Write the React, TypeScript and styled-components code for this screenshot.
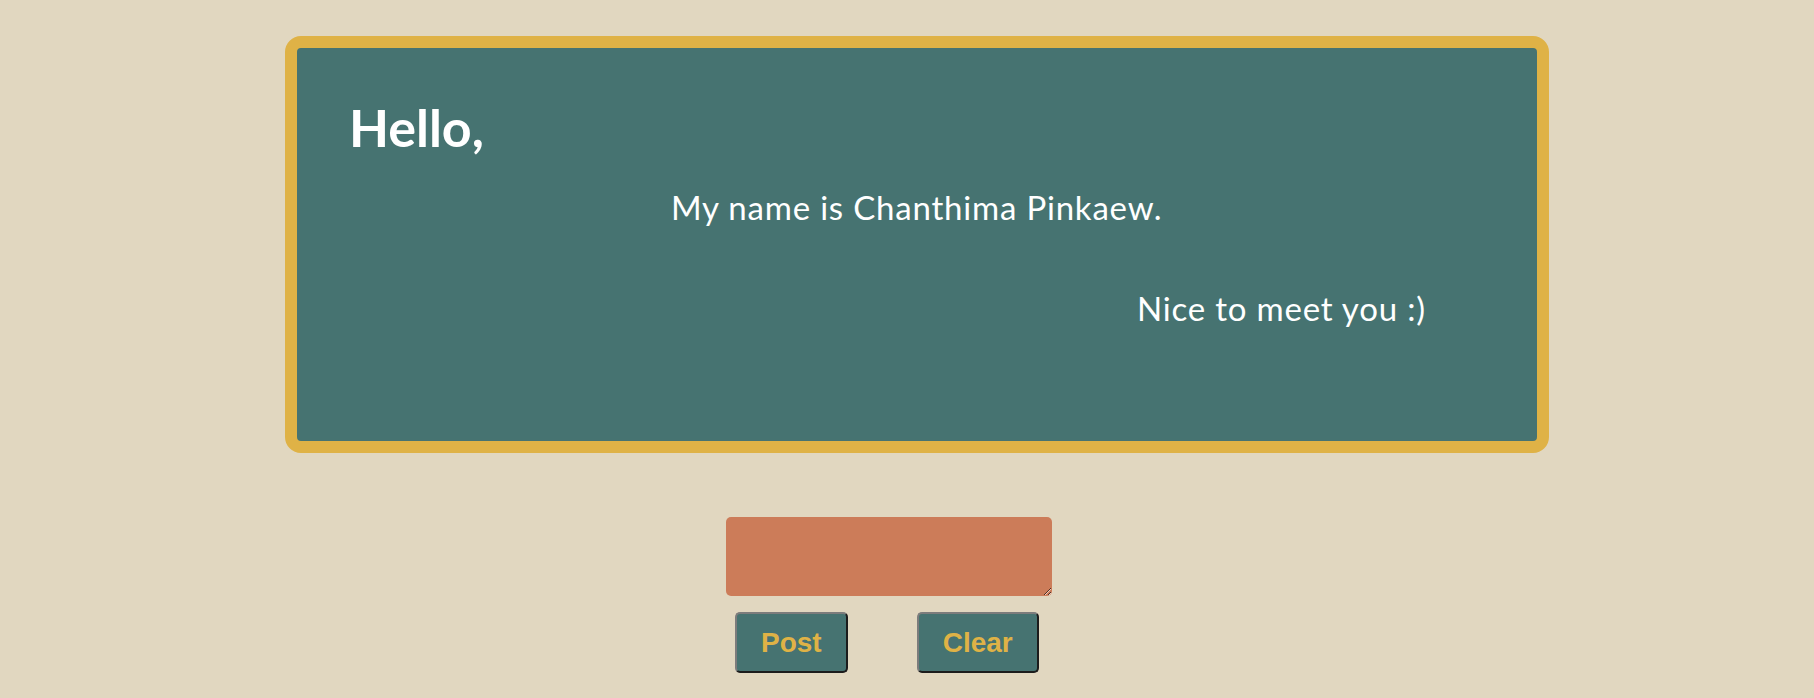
import React from "react";
import styled, { createGlobalStyle } from "styled-components";

const Global = createGlobalStyle`
  html, body {
    margin: 0;
    padding: 0;
    background: #e1d7c0;
  }
  body {
    font-family: "Lato", "Open Sans", sans-serif;
  }
`;

const Page = styled.main`
  min-height: 698px;
  padding-top: 36px;
  box-sizing: border-box;
`;

const Card = styled.section`
  box-sizing: border-box;
  margin-left: 285px;
  width: 1264px;
  height: 417px;
  border: 12px solid #dfb246;
  border-radius: 16px;
  background: #467371;
  color: #ffffff;
  padding-top: 53px;
`;

const Greeting = styled.h1`
  margin: 0 0 38px 52px;
  font-size: 52px;
  line-height: 52px;
  font-weight: 700;
`;

const Line = styled.p<{ $indent: number; $gap?: number }>`
  margin: ${(p) => p.$gap ?? 0}px 0 0 ${(p) => p.$indent}px;
  font-size: 33px;
  line-height: 33px;
  font-weight: 400;
  letter-spacing: 0.8px;
`;

const Form = styled.form`
  margin-top: 64px;
  display: flex;
  flex-direction: column;
  align-items: flex-start;
`;

const Box = styled.textarea`
  display: block;
  margin-left: 726px;
  width: 326px;
  height: 79px;
  box-sizing: border-box;
  border: none;
  border-radius: 5px;
  background: #cc7c59;
  outline: none;
`;

const Actions = styled.div`
  display: flex;
  gap: 69px;
  margin: 16px 0 0 735px;
`;

const Button = styled.button`
  box-sizing: border-box;
  height: 61px;
  padding: 0 24px;
  background: #467371;
  color: #dfb246;
  font-family: "Liberation Sans", Arial, sans-serif;
  font-weight: 700;
  font-size: 28px;
  border: 2px solid;
  border-color: #7c7c7c #1c1c1c #1c1c1c #7c7c7c;
  border-radius: 5px;
  cursor: pointer;
`;

export default function App() {
  return (
    <Page>
      <Global />
      <Card>
        <Greeting>Hello,</Greeting>
        <Line $indent={374}>My name is Chanthima Pinkaew.</Line>
        <Line $indent={840} $gap={68}>Nice to meet you :)</Line>
      </Card>
      <Form onSubmit={(e) => e.preventDefault()}>
        <Box />
        <Actions>
          <Button type="submit">Post</Button>
          <Button type="button">Clear</Button>
        </Actions>
      </Form>
    </Page>
  );
}
